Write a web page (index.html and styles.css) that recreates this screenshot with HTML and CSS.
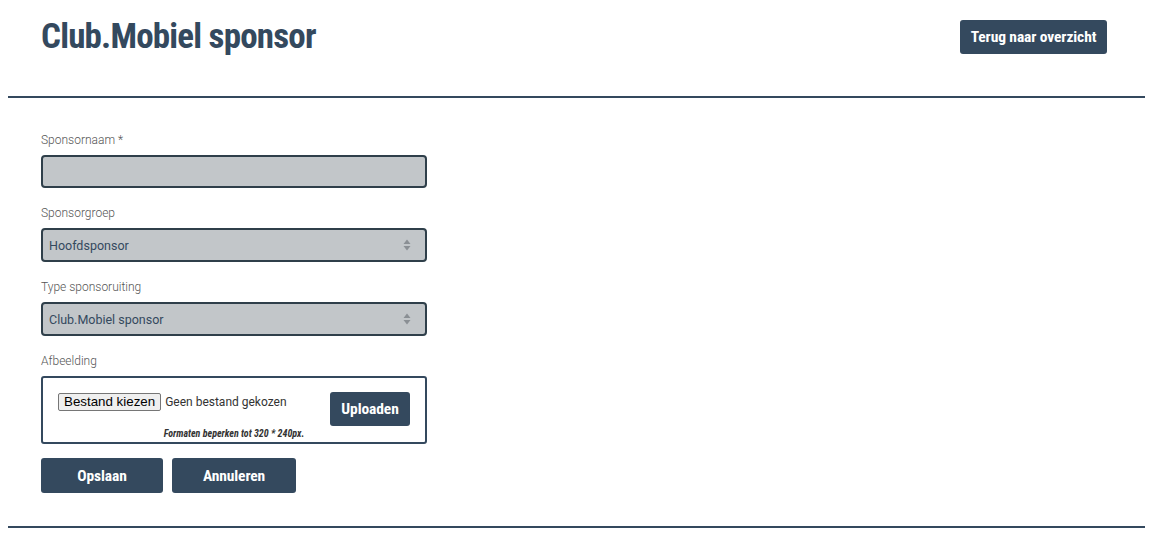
FILE: index.html
```html
<!DOCTYPE html>
<html lang="nl">
<head>
<meta charset="utf-8">
<title>Club.Mobiel sponsor</title>
<link rel="stylesheet" href="styles.css">
</head>
<body>
<div class="page">
  <header class="header">
    <h1 class="title">Club.Mobiel sponsor</h1>
    <a class="btn btn-back" href="#">Terug naar overzicht</a>
  </header>
  <hr class="rule">
  <form class="form">
    <label class="label">Sponsornaam *</label>
    <input class="field" type="text">
    <label class="label">Sponsorgroep</label>
    <div class="select">
      <span>Hoofdsponsor</span>
      <svg class="arrows" width="8" height="12" viewBox="0 0 8 12"><path d="M4 0.5 L7.5 5 H0.5Z M4 11.5 L7.5 7 H0.5Z" fill="#8a8f94"/></svg>
    </div>
    <label class="label">Type sponsoruiting</label>
    <div class="select">
      <span>Club.Mobiel sponsor</span>
      <svg class="arrows" width="8" height="12" viewBox="0 0 8 12"><path d="M4 0.5 L7.5 5 H0.5Z M4 11.5 L7.5 7 H0.5Z" fill="#8a8f94"/></svg>
    </div>
    <label class="label">Afbeelding</label>
    <div class="upload">
      <div class="upload-row">
        <div class="file">
          <span class="file-btn">Bestand kiezen</span>
          <span class="file-text">Geen bestand gekozen</span>
        </div>
        <span class="btn btn-upload">Uploaden</span>
      </div>
      <div class="hint">Formaten beperken tot 320 * 240px.</div>
    </div>
    <div class="actions">
      <span class="btn btn-action">Opslaan</span>
      <span class="btn btn-action btn-cancel">Annuleren</span>
    </div>
  </form>
  <hr class="rule rule-bottom">
</div>
</body>
</html>
```

FILE: styles.css
```css
* { box-sizing: border-box; }
body {
  margin: 8px;
  font-family: Roboto, "Liberation Sans", sans-serif;
  background: #fff;
  color: #34495e;
}
.page { width: 1137px; }
.header {
  display: flex;
  justify-content: space-between;
  align-items: flex-start;
  padding: 12px 38px 0 33px;
  height: 88px;
}
.title {
  margin: 0;
  font-family: Roboto, sans-serif;
  font-stretch: condensed;
  font-weight: 700;
  font-size: 35px;
  line-height: 34px;
  letter-spacing: -0.8px;
  color: #34495e;
}
.btn {
  display: inline-flex;
  align-items: center;
  justify-content: center;
  background: #34495e;
  color: #fff;
  font-family: Roboto, sans-serif;
  font-stretch: condensed;
  font-weight: 700;
  font-size: 15.5px;
  letter-spacing: -0.1px;
  border-radius: 3px;
  text-decoration: none;
}
.btn-back { width: 147px; height: 34px; }
.rule {
  margin: 0;
  border: 0;
  height: 2px;
  background: #34495e;
}
.form {
  display: flex;
  flex-direction: column;
  align-items: flex-start;
  padding: 35px 0 33px 33px;
}
.label {
  font-size: 12px;
  font-weight: 300;
  color: #555;
  line-height: 14px;
  margin-bottom: 8px;
}
.field, .select {
  width: 386px;
  height: 33px;
  background: #c2c6c9;
  border: 2px solid #2f3f4a;
  border-radius: 4px;
  margin: 0 0 18px 0;
}
.select {
  display: flex;
  height: 34px;
  align-items: center;
  justify-content: space-between;
  padding: 0 14px 0 6px;
  font-size: 12.5px;
  color: #34495e;
}
.upload {
  width: 386px;
  height: 68px;
  border: 2px solid #34495e;
  border-radius: 3px;
  padding: 14px 15px 0 15px;
  margin-bottom: 14px;
}
.upload-row {
  display: flex;
  justify-content: space-between;
  align-items: flex-start;
}
.file {
  display: flex;
  align-items: center;
  margin-top: 1px;
}
.file-btn {
  font-family: "Liberation Sans", Arial, sans-serif;
  font-size: 13.33px;
  color: #000;
  background: #efefef;
  border: 1px solid #767676;
  border-radius: 2px;
  padding: 1px 5px;
  line-height: 14px;
}
.file-text {
  margin-left: 4px;
  font-family: Roboto, sans-serif;
  font-size: 12px;
  color: #333;
}
.btn-upload { width: 80px; height: 34px; }
.hint {
  text-align: center;
  font-family: Roboto, sans-serif;
  font-stretch: condensed;
  font-weight: 700;
  font-style: italic;
  font-size: 10px;
  line-height: 12px;
  color: #333;
  margin-top: 2px;
}
.actions { display: flex; gap: 9px; }
.btn-action { width: 122px; height: 35px; }
.btn-cancel { width: 124px; }
```
